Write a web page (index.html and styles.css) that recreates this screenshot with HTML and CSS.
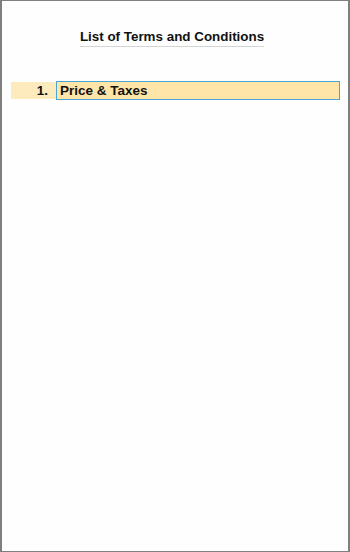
FILE: index.html
```html
<!DOCTYPE html>
<html>
<head>
<meta charset="utf-8">
<link rel="stylesheet" href="styles.css">
</head>
<body>
<div class="frame">
  <div class="title-wrap"><h1 class="title">List of Terms and Conditions</h1></div>
  <div class="row">
    <div class="num">1.</div>
    <div class="field">Price &amp; Taxes</div>
  </div>
</div>
</body>
</html>
```
FILE: styles.css
```css
html, body { margin: 0; padding: 0; }
body { width: 350px; height: 552px; background: #fff; font-family: "Liberation Sans", Arial, sans-serif; }
.frame {
  box-sizing: border-box;
  width: 350px;
  height: 552px;
  border: 1px solid #7f7f7f;
  border-left-width: 2px;
  border-right-width: 2px;
  background: #fefefe;
  padding-top: 27px;
}
.title-wrap { display: flex; justify-content: center; padding-right: 6px; }
.title {
  margin: 0;
  font-size: 13.4px;
  font-weight: bold;
  color: #111;
  line-height: 17px;
  padding-bottom: 1px;
  border-bottom: 1px solid #d4d4d4;
}
.row {
  display: flex;
  margin: 34px 8px 0 9px;
  align-items: stretch;
}
.num {
  width: 45px;
  box-sizing: border-box;
  background: #fdebbd;
  text-align: right;
  padding-right: 8px;
  font-size: 13.5px;
  font-weight: bold;
  line-height: 17px;
  margin: 1px 0;
  color: #111;
}
.field {
  flex: 1;
  background: #ffe6a8;
  border: 1px solid #4ba5d3;
  font-size: 13.5px;
  font-weight: bold;
  line-height: 17px;
  padding-left: 3px;
  color: #111;
}
```
